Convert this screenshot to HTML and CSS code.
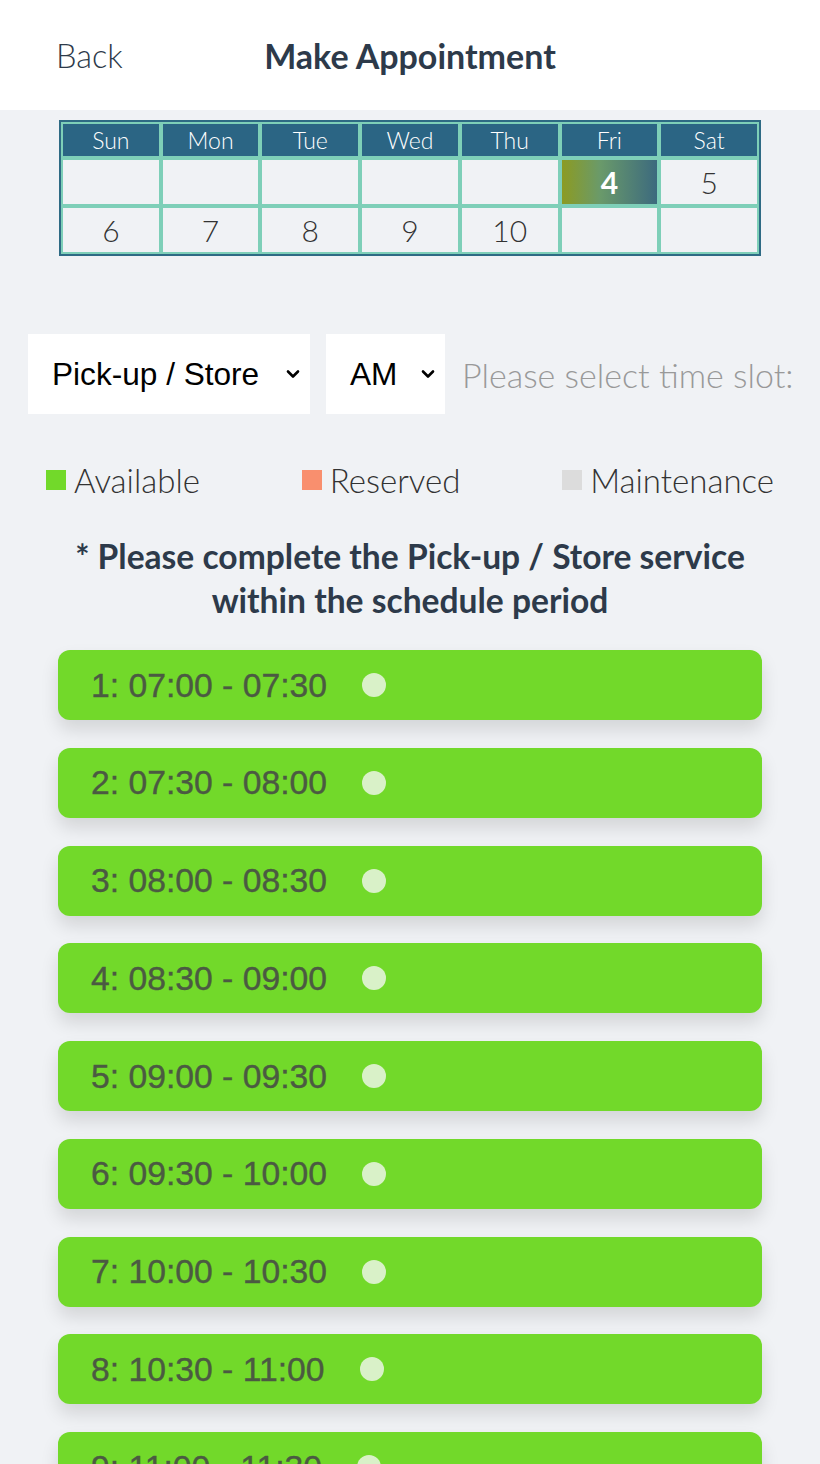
FILE: index.html
```html
<!DOCTYPE html>
<html lang="en">
    <head>
        <meta charset="UTF-8"/>
        <title>Make Appointment</title>
        <link rel="stylesheet" href="styles.css">
    </head>
    <body>
        <header class="topbar">
          <a class="back" href="#">Back</a>
          <h1 class="title">Make Appointment</h1>
          <span></span>
        </header>
        <main>
          <table class="calendar">
            <thead>
              <tr><th>Sun</th><th>Mon</th><th>Tue</th><th>Wed</th><th>Thu</th><th>Fri</th><th>Sat</th></tr>
            </thead>
            <tbody>
              <tr><td></td><td></td><td></td><td></td><td></td><td class="today">4</td><td>5</td></tr>
              <tr><td>6</td><td>7</td><td>8</td><td>9</td><td>10</td><td></td><td></td></tr>
            </tbody>
          </table>

          <div class="controls">
            <div class="select select-service">
              <span>Pick-up / Store</span>
              <svg class="chevron" width="14" height="10" viewBox="0 0 14 10"><path d="M2 2.5 L7 7.5 L12 2.5" fill="none" stroke="#000" stroke-width="2.6" stroke-linecap="round" stroke-linejoin="round"/></svg>
            </div>
            <div class="select select-period">
              <span>AM</span>
              <svg class="chevron" width="14" height="10" viewBox="0 0 14 10"><path d="M2 2.5 L7 7.5 L12 2.5" fill="none" stroke="#000" stroke-width="2.6" stroke-linecap="round" stroke-linejoin="round"/></svg>
            </div>
            <span class="hint">Please select time slot:</span>
          </div>

          <ul class="legend">
            <li><i class="swatch swatch-available"></i>Available</li>
            <li><i class="swatch swatch-reserved"></i>Reserved</li>
            <li><i class="swatch swatch-maintenance"></i>Maintenance</li>
          </ul>

          <p class="notice">* Please complete the Pick-up / Store service<br>within the schedule period</p>

          <div class="slots">
            <div class="slot"><span>1: 07:00 - 07:30</span><i class="dot"></i></div>
            <div class="slot"><span>2: 07:30 - 08:00</span><i class="dot"></i></div>
            <div class="slot"><span>3: 08:00 - 08:30</span><i class="dot"></i></div>
            <div class="slot"><span>4: 08:30 - 09:00</span><i class="dot"></i></div>
            <div class="slot"><span>5: 09:00 - 09:30</span><i class="dot"></i></div>
            <div class="slot"><span>6: 09:30 - 10:00</span><i class="dot"></i></div>
            <div class="slot"><span>7: 10:00 - 10:30</span><i class="dot"></i></div>
            <div class="slot"><span>8: 10:30 - 11:00</span><i class="dot"></i></div>
            <div class="slot"><span>9: 11:00 - 11:30</span><i class="dot"></i></div>
            <div class="slot"><span>10: 11:30 - 12:00</span><i class="dot"></i></div>
          </div>
        </main>
    </body>
</html>
```

FILE: styles.css
```css
body {
  margin: 0;
  background: #f0f2f5;
  font-family: Lato, "Noto Sans", sans-serif;
  color: #2d3a4a;
}

.topbar {
  display: grid;
  grid-template-columns: 1fr auto 1fr;
  align-items: center;
  height: 110px;
  background: #fff;
}
.back {
  padding-left: 56px;
  font-size: 32.5px;
  font-weight: 300;
  color: #2d3a4a;
  text-decoration: none;
}
.title {
  margin: 0;
  font-size: 34px;
  font-weight: bold;
  color: #2d3a4a;
}

/* calendar */
.calendar {
  width: 702px;
  margin: 10px auto 0;
  border: 2px solid #2e6a84;
  border-spacing: 0;
  table-layout: fixed;
}
.calendar th,
.calendar td {
  border: 2px solid #7ecfb8;
  text-align: center;
  padding: 0;
}
.calendar th {
  height: 32px;
  background: #2b6584;
  color: #fff;
  font-size: 23px;
  font-weight: 300;
}
.calendar td {
  height: 44px;
  font-size: 30px;
  font-weight: 300;
  color: #333;
}
.calendar td.today {
  background: linear-gradient(to right, #8c9b22, #6a9a6a 40%, #3c6a7e);
  color: #fff;
  font-weight: bold;
}

/* selects */
.controls {
  display: flex;
  align-items: center;
  gap: 16px;
  margin-top: 78px;
  padding-left: 28px;
}
.select {
  display: flex;
  align-items: center;
  justify-content: space-between;
  box-sizing: border-box;
  height: 80px;
  padding: 0 10px 0 24px;
  background: #fff;
  font-family: "Liberation Sans", Arial, sans-serif;
  font-size: 31.6px;
  color: #000;
}
.select-service {
  width: 282px;
}
.select-period {
  width: 119px;
}
.hint {
  margin-left: 1px;
  font-size: 34px;
  font-weight: 300;
  color: #999;
}

/* legend */
.legend {
  display: flex;
  justify-content: space-between;
  margin: 46px 0 0;
  padding: 0 46px 0 46px;
  list-style: none;
}
.legend li {
  display: flex;
  align-items: center;
  font-size: 33px;
  font-weight: 300;
  color: #333;
}
.swatch {
  width: 20px;
  height: 20px;
  margin-right: 8px;
}
.swatch-available { background: #72d92a; }
.swatch-reserved { background: #f98f6e; }
.swatch-maintenance { background: #dcdcdc; }

.notice {
  margin: 34px 0 0;
  text-align: center;
  font-size: 33.6px;
  font-weight: bold;
  line-height: 44px;
  color: #2d3a4a;
}

/* time slots */
.slots {
  display: flex;
  flex-direction: column;
  gap: 27.75px;
  margin: 28px 58px 0;
}
.slot {
  display: flex;
  align-items: center;
  height: 70px;
  padding-left: 33px;
  border-radius: 12px;
  background: #72d92a;
  box-shadow: 0 10px 18px rgba(0, 0, 0, 0.12);
  font-family: "Liberation Sans", Arial, sans-serif;
  font-size: 33.7px;
  color: #4b5a42;
  -webkit-text-stroke: 0.4px #4b5a42;
}
.dot {
  width: 24px;
  height: 24px;
  margin-left: 35px;
  border-radius: 50%;
  background: #d9f1c8;
}
```
